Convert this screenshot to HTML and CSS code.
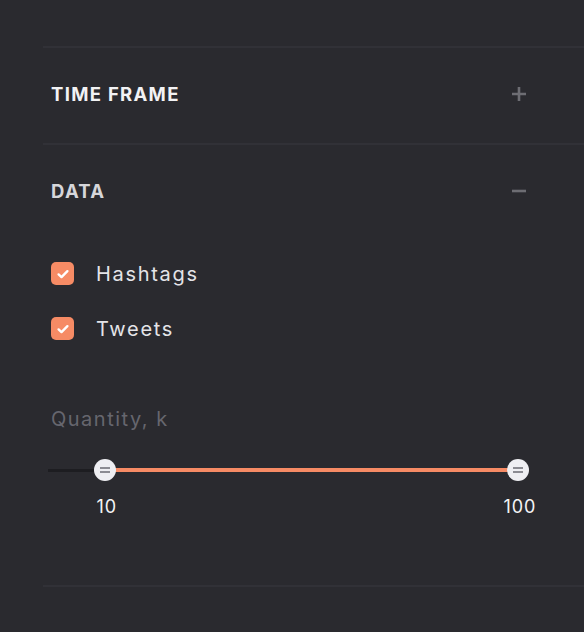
FILE: index.html
```html
<!DOCTYPE html>
<html>
<head>
<meta charset="utf-8">
<link rel="stylesheet" href="styles.css">
</head>
<body>
<div class="panel">
  <div class="divider"></div>
  <section class="section">
    <div class="section-head head-closed">
      <span class="section-title">TIME FRAME</span>
      <svg class="toggle" width="16" height="16" viewBox="0 0 16 16"><path d="M8 1v14M1 8h14" stroke="#6d6d73" stroke-width="2.6" fill="none"/></svg>
    </div>
  </section>
  <div class="divider"></div>
  <section class="section">
    <div class="section-head head-open">
      <span class="section-title">DATA</span>
      <svg class="toggle" width="16" height="16" viewBox="0 0 16 16"><path d="M1 8h14" stroke="#6d6d73" stroke-width="2.6" fill="none"/></svg>
    </div>
    <div class="checks">
      <label class="check-row">
        <span class="box"><svg width="16" height="16" viewBox="0 0 16 16"><path d="M3.6 8.4l2.9 2.7L12.4 5.2" stroke="#fff" stroke-width="2.4" fill="none" stroke-linecap="round" stroke-linejoin="round"/></svg></span>
        <span class="check-label">Hashtags</span>
      </label>
      <label class="check-row">
        <span class="box"><svg width="16" height="16" viewBox="0 0 16 16"><path d="M3.6 8.4l2.9 2.7L12.4 5.2" stroke="#fff" stroke-width="2.4" fill="none" stroke-linecap="round" stroke-linejoin="round"/></svg></span>
        <span class="check-label">Tweets</span>
      </label>
    </div>
    <div class="field-label">Quantity, k</div>
    <div class="slider">
      <div class="track"></div>
      <div class="fill" style="left:12.1%;right:0%"></div>
      <div class="thumb" style="left:12.1%"><span></span></div>
      <div class="thumb" style="left:100%"><span></span></div>
    </div>
    <div class="slider-values">
      <span class="value" style="left:12.5%">10</span>
      <span class="value" style="left:100.4%">100</span>
    </div>
  </section>
  <div class="divider"></div>
</div>
</body>
</html>
```

FILE: styles.css
```css
* { box-sizing: border-box; }
html, body {
  margin: 0;
  background: #2a2a2f;
}
body {
  width: 584px;
  height: 632px;
  overflow: hidden;
  font-family: "Inter", "Open Sans", sans-serif;
  color: #ececf0;
}
.panel {
  padding-top: 46px;
}
.divider {
  height: 2px;
  margin-left: 43px;
  background: #313137;
}
.section-head {
  display: flex;
  align-items: center;
  justify-content: space-between;
  padding: 0 57px 0 51px;
}
.head-closed {
  height: 95px;
  padding-bottom: 3px;
}
.head-open {
  height: 89px;
  padding-top: 3px;
}
.section-title {
  font-size: 18.5px;
  font-weight: 700;
  letter-spacing: 1.3px;
  color: #f2f2f4;
}
.head-open .section-title { color: #d6d6da; }
.toggle { display: block; }
.checks {
  margin-top: 12px;
  padding-left: 51px;
}
.check-row {
  display: flex;
  align-items: center;
  height: 55px;
}
.box {
  width: 23px;
  height: 23px;
  border-radius: 5px;
  background: #f68b65;
  display: flex;
  align-items: center;
  justify-content: center;
  margin-right: 22px;
}
.box svg { display: block; }
.check-label {
  font-size: 20px;
  letter-spacing: 1.7px;
  color: #e4e4e8;
  line-height: 24px;
}
.field-label {
  margin-top: 51px;
  padding-left: 51px;
  font-size: 20px;
  line-height: 24px;
  letter-spacing: 1.5px;
  color: #66666e;
}
.slider {
  position: relative;
  margin: 28px 0 0 48px;
  width: 470px;
  height: 22px;
}
.track {
  position: absolute;
  left: 0; right: 0;
  top: 10px;
  height: 3px;
  background: #1d1d21;
}
.fill {
  position: absolute;
  top: 9px;
  height: 4px;
  background: #f68b65;
}
.thumb {
  position: absolute;
  top: 0;
  width: 22px;
  height: 22px;
  margin-left: -11px;
  border-radius: 50%;
  background: #eeeef2;
  display: flex;
  align-items: center;
  justify-content: center;
}
.thumb span {
  width: 10px;
  height: 6px;
  border-top: 2px solid #8b8b92;
  border-bottom: 2px solid #8b8b92;
}
.slider-values {
  position: relative;
  margin: 15px 0 67px 48px;
  width: 470px;
  height: 22px;
}
.value {
  position: absolute;
  top: 0;
  transform: translateX(-50%);
  font-size: 18px;
  line-height: 22px;
  letter-spacing: 0.9px;
  color: #f4f4f6;
}
```
